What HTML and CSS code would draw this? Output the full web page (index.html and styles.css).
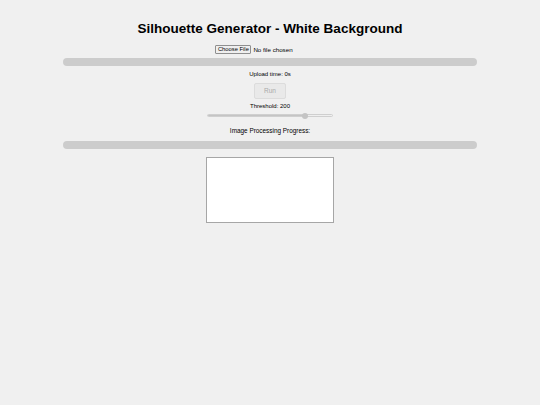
FILE: index.html
```html
<!DOCTYPE html>
<html>
<head>
<meta charset="utf-8">
<link rel="stylesheet" href="styles.css">
</head>
<body>
<div class="page">
  <h1 class="title">Silhouette Generator - White Background</h1>
  <div class="file-row">
    <span class="file-btn">Choose File</span><span class="file-name">No file chosen</span>
  </div>
  <div class="bar bar-upload"></div>
  <div class="small upload-time">Upload time: 0s</div>
  <div class="run-btn">Run</div>
  <div class="small threshold">Threshold: 200</div>
  <div class="slider">
    <div class="slider-fill" style="width: 78.4%"></div>
    <div class="slider-thumb" style="left: 78.4%"></div>
  </div>
  <div class="label">Image Processing Progress:</div>
  <div class="bar bar-process"></div>
  <div class="canvas"></div>
</div>
</body>
</html>
```

FILE: styles.css
```css
html, body {
  margin: 0;
  padding: 0;
  background: #f0f0f0;
  font-family: "Liberation Sans", Arial, sans-serif;
  color: #000;
}
.page {
  display: flex;
  flex-direction: column;
  align-items: center;
  width: 540px;
  height: 405px;
}
.title {
  font-size: 13.5px;
  font-weight: bold;
  margin: 21px 0 0 0;
  line-height: 16px;
}
.file-row {
  display: flex;
  align-items: center;
  margin-top: 8px;
  height: 9px;
  padding-right: 32px;
}
.file-btn {
  box-sizing: border-box;
  height: 9px;
  width: 36px;
  border: 1px solid #8f8f8f;
  border-radius: 1px;
  background: #efefef;
  font-size: 5.8px;
  line-height: 7px;
  text-align: center;
  color: #000;
}
.file-name {
  font-size: 6.2px;
  margin-left: 2px;
}
.bar {
  width: 414px;
  height: 8px;
  border-radius: 4px;
  background: #cccccc;
}
.bar-upload {
  margin-top: 4px;
}
.small {
  font-size: 6px;
  line-height: 8px;
}
.upload-time {
  margin-top: 4px;
}
.run-btn {
  box-sizing: border-box;
  margin-top: 5px;
  width: 32px;
  height: 16px;
  border: 1px solid #dcdcdc;
  border-radius: 2px;
  background: #e9e9e9;
  color: #a9a9a9;
  font-size: 6.5px;
  line-height: 14px;
  text-align: center;
}
.threshold {
  margin-top: 3px;
}
.slider {
  position: relative;
  width: 126px;
  height: 3px;
  margin-top: 4px;
  border-radius: 2px;
  background: #efefef;
  border: 0.5px solid #cfcfcf;
  box-sizing: border-box;
}
.slider-fill {
  height: 100%;
  background: #c4c4c4;
  border-radius: 2px;
}
.slider-thumb {
  position: absolute;
  top: -2px;
  width: 6px;
  height: 6px;
  margin-left: -3px;
  border-radius: 50%;
  background: #c4c4c4;
}
.label {
  font-size: 6.4px;
  line-height: 8px;
  margin-top: 10px;
}
.bar-process {
  margin-top: 6px;
}
.canvas {
  box-sizing: border-box;
  margin-top: 8px;
  width: 128px;
  height: 66px;
  background: #fff;
  border: 1px solid #a6a6a6;
}
```
